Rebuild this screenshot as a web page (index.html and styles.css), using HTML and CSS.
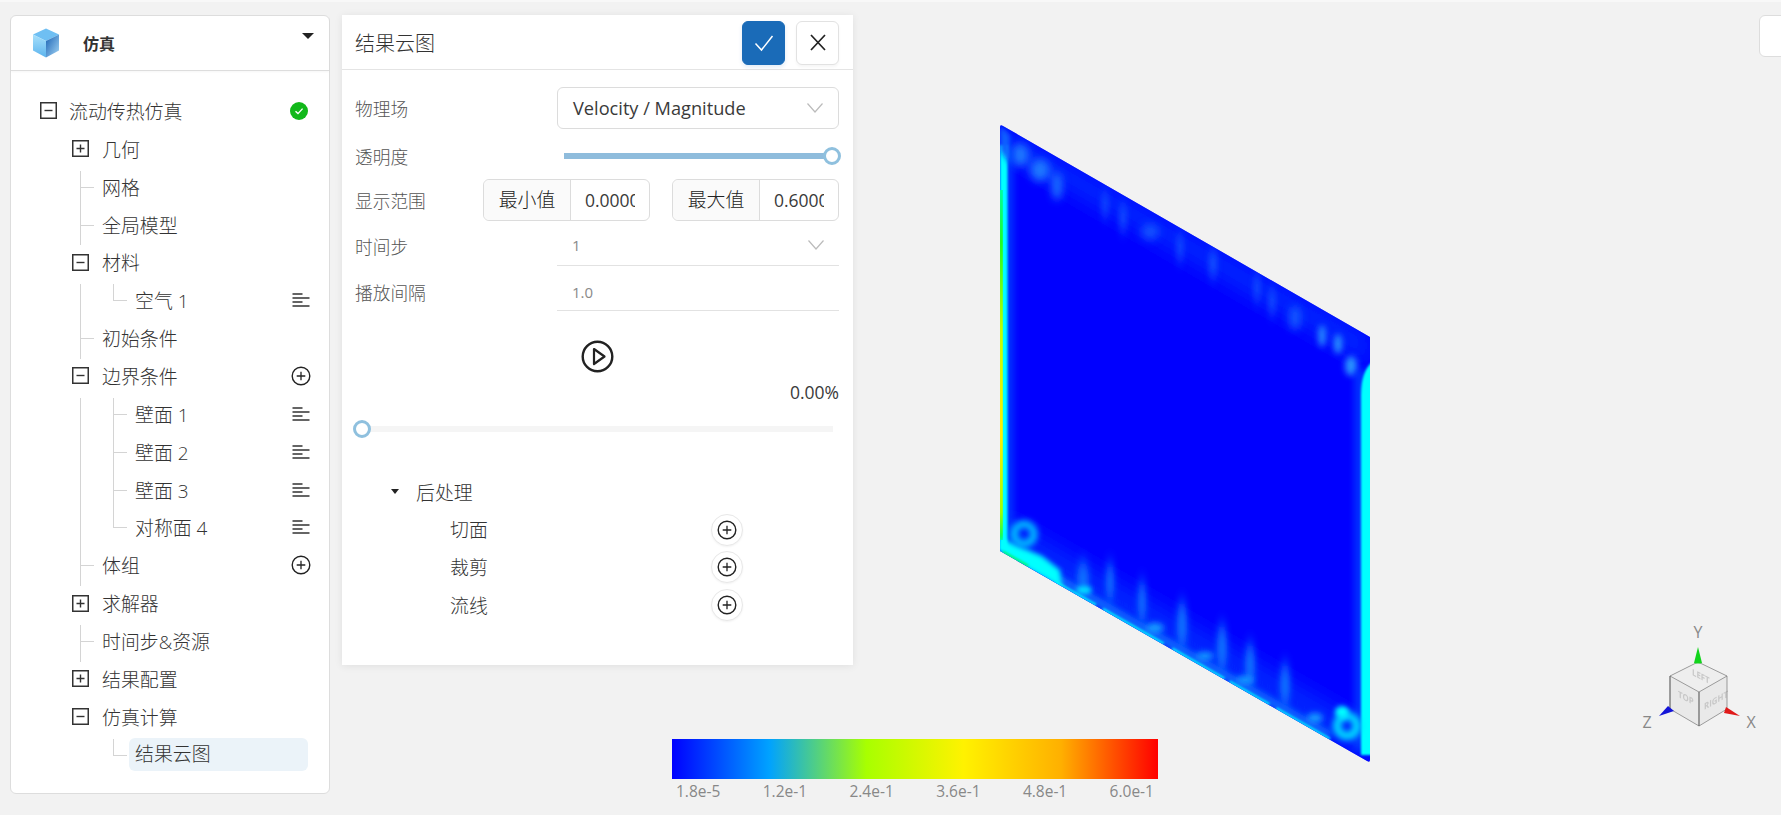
FILE: index.html
```html
<!DOCTYPE html>
<html lang="zh-CN">
  <head>
    <meta charset="UTF-8" />
    <title>仿真</title>
    <link rel="stylesheet" href="styles.css">
  </head>
  <body>
    <svg class="sprites" aria-hidden="true">
      <symbol id="i-plus" viewBox="0 0 17 17"><rect x="0.75" y="0.75" width="15.5" height="15.5" fill="#fff" stroke="#333" stroke-width="1.5"/><path d="M4.5 8.5h8M8.5 4.5v8" stroke="#333" stroke-width="1.4"/></symbol>
      <symbol id="i-minus" viewBox="0 0 17 17"><rect x="0.75" y="0.75" width="15.5" height="15.5" fill="#fff" stroke="#333" stroke-width="1.5"/><path d="M4.5 8.5h8" stroke="#333" stroke-width="1.4"/></symbol>
      <symbol id="i-lines" viewBox="0 0 18 14"><path d="M0.5 1h10M0.5 5h17M0.5 9h10M0.5 13h17" stroke="#333" stroke-width="1.3" fill="none"/></symbol>
      <symbol id="i-add" viewBox="0 0 20 20"><circle cx="10" cy="10" r="8.8" fill="#fff" stroke="#222" stroke-width="1.4"/><path d="M5.7 10h8.6M10 5.7v8.6" stroke="#222" stroke-width="1.3"/></symbol>
    </svg>

    <div class="app">
      <!-- 左侧仿真树 -->
      <aside class="sim-panel">
        <div class="sim-head">
          <svg class="sim-logo" viewBox="0 0 28 30">
            <defs>
              <linearGradient id="cube-a" x1="0" y1="0" x2="0" y2="1"><stop offset="0" stop-color="#a8e0fb"/><stop offset="1" stop-color="#5cb4ee"/></linearGradient>
              <linearGradient id="cube-b" x1="0" y1="0" x2="1" y2="1"><stop offset="0" stop-color="#1a62b4"/><stop offset="1" stop-color="#a4d6f6"/></linearGradient>
            </defs>
            <path d="M14 0.5 27 6.5 14 13 1 6.5Z" fill="#6fbff3"/>
            <path d="M1 6.5 14 13V29.5L1 22.5Z" fill="url(#cube-a)"/>
            <path d="M27 6.5 14 13V29.5L27 22.5Z" fill="url(#cube-b)"/>
          </svg>
          <span class="sim-title">仿真</span>
          <i class="caret caret-head"></i>
        </div>
        <ul class="tree">
          <li class="row row-root"><svg class="box"><use href="#i-minus"/></svg><span>流动传热仿真</span>
            <svg class="act done" viewBox="0 0 18 18"><circle cx="9" cy="9" r="9" fill="#12b81a"/><path d="M5.5 9.2 8 11.6 12.6 6.6" stroke="#fff" stroke-width="1.4" fill="none"/></svg>
          </li>
          <li class="row"><svg class="box"><use href="#i-plus"/></svg><span>几何</span></li>
          <li>
            <ul class="group">
              <li class="row leaf"><span>网格</span></li>
              <li class="row leaf"><span>全局模型</span></li>
            </ul>
          </li>
          <li class="row"><svg class="box"><use href="#i-minus"/></svg><span>材料</span></li>
          <li>
            <ul class="group">
              <li>
                <ul class="sub">
                  <li class="row deep"><span>空气 1</span><svg class="act lines"><use href="#i-lines"/></svg></li>
                </ul>
              </li>
              <li class="row leaf"><span>初始条件</span></li>
            </ul>
          </li>
          <li class="row"><svg class="box"><use href="#i-minus"/></svg><span>边界条件</span><svg class="act add"><use href="#i-add"/></svg></li>
          <li>
            <ul class="group">
              <li>
                <ul class="sub">
                  <li class="row deep"><span>壁面 1</span><svg class="act lines"><use href="#i-lines"/></svg></li>
                  <li class="row deep"><span>壁面 2</span><svg class="act lines"><use href="#i-lines"/></svg></li>
                  <li class="row deep"><span>壁面 3</span><svg class="act lines"><use href="#i-lines"/></svg></li>
                  <li class="row deep"><span>对称面 4</span><svg class="act lines"><use href="#i-lines"/></svg></li>
                </ul>
              </li>
              <li class="row leaf"><span>体组</span><svg class="act add"><use href="#i-add"/></svg></li>
            </ul>
          </li>
          <li class="row"><svg class="box"><use href="#i-plus"/></svg><span>求解器</span></li>
          <li>
            <ul class="group">
              <li class="row leaf"><span>时间步&amp;资源</span></li>
            </ul>
          </li>
          <li class="row"><svg class="box"><use href="#i-plus"/></svg><span>结果配置</span></li>
          <li class="row"><svg class="box"><use href="#i-minus"/></svg><span>仿真计算</span></li>
          <li>
            <ul class="sub sub-top">
              <li class="row deep selected"><span>结果云图</span></li>
            </ul>
          </li>
        </ul>
      </aside>

      <!-- 结果云图面板 -->
      <section class="result-panel">
        <div class="result-head">
          <span class="result-title">结果云图</span>
          <button class="btn btn-ok">
            <svg viewBox="0 0 20 20" width="20" height="20"><path d="M1.5 10.5 7.5 17 18.5 3" stroke="#fff" stroke-width="1.5" fill="none"/></svg>
          </button>
          <button class="btn btn-close">
            <svg viewBox="0 0 16 17" width="16" height="17"><path d="M1 1 15 16M15 1 1 16" stroke="#222" stroke-width="1.7" fill="none"/></svg>
          </button>
        </div>

        <div class="form">
          <div class="field field-select">
            <label>物理场</label>
            <div class="select">
              <span>Velocity / Magnitude</span>
              <svg class="chev" viewBox="0 0 16 10"><path d="M0.5 0.5 8 9 15.5 0.5" stroke="#bbb" stroke-width="1.2" fill="none"/></svg>
            </div>
          </div>
          <div class="field field-alpha">
            <label>透明度</label>
            <div class="slider slider-alpha"><i class="thumb"></i></div>
          </div>
          <div class="field field-range">
            <label>显示范围</label>
            <div class="ranges">
              <div class="range"><b>最小值</b><input value="0.00000" readonly></div>
              <div class="range"><b>最大值</b><input value="0.60000" readonly></div>
            </div>
          </div>
          <div class="field field-line">
            <label>时间步</label>
            <div class="plain">
              <span>1</span>
              <svg class="chev" viewBox="0 0 16 10"><path d="M0.5 0.5 8 9 15.5 0.5" stroke="#bbb" stroke-width="1.2" fill="none"/></svg>
            </div>
          </div>
          <div class="field field-line field-last">
            <label>播放间隔</label>
            <div class="plain"><span>1.0</span></div>
          </div>
        </div>

        <div class="play">
          <svg viewBox="0 0 33 33" width="33" height="33"><circle cx="16.5" cy="16.5" r="14.8" fill="none" stroke="#222" stroke-width="2.4"/><path d="M13 9 23.5 16.5 13 24Z" fill="none" stroke="#222" stroke-width="2.2" stroke-linejoin="round"/></svg>
        </div>
        <div class="percent">0.00%</div>
        <div class="slider slider-time"><i class="thumb"></i></div>

        <ul class="post">
          <li class="post-row post-root"><i class="caret"></i><span>后处理</span></li>
          <li class="post-row"><span>切面</span><button class="round"><svg width="20" height="20"><use href="#i-add"/></svg></button></li>
          <li class="post-row"><span>裁剪</span><button class="round"><svg width="20" height="20"><use href="#i-add"/></svg></button></li>
          <li class="post-row"><span>流线</span><button class="round"><svg width="20" height="20"><use href="#i-add"/></svg></button></li>
        </ul>
      </section>
    </div>

    <!-- 三维视图里的内容 -->
    <div class="corner-btn"></div>

    <svg class="mesh" viewBox="990 115 400 670">
      <defs>
        <clipPath id="plate"><path d="M1000 127Q1000 124 1003 126L1370 337V760Q1370 763 1367 761L1000 551Z"/></clipPath>
        <filter id="b1" filterUnits="userSpaceOnUse" x="990" y="115" width="400" height="670"><feGaussianBlur stdDeviation="1"/></filter>
        <filter id="b2" filterUnits="userSpaceOnUse" x="990" y="115" width="400" height="670"><feGaussianBlur stdDeviation="2.4"/></filter>
        <filter id="b3" filterUnits="userSpaceOnUse" x="990" y="115" width="400" height="670"><feGaussianBlur stdDeviation="3.2"/></filter>
        <filter id="b4" filterUnits="userSpaceOnUse" x="990" y="115" width="400" height="670"><feGaussianBlur stdDeviation="4.5"/></filter>
        <filter id="b9" filterUnits="userSpaceOnUse" x="990" y="115" width="400" height="670"><feGaussianBlur stdDeviation="10"/></filter>
        <filter id="streak" filterUnits="userSpaceOnUse" x="990" y="115" width="400" height="670"><feGaussianBlur stdDeviation="3 8"/></filter>
        <linearGradient id="edge" x1="0" y1="0" x2="0" y2="1">
          <stop offset="0" stop-color="#00ffa0"/>
          <stop offset="0.15" stop-color="#20ff20"/>
          <stop offset="0.4" stop-color="#c0ff00"/>
          <stop offset="0.7" stop-color="#fff000"/>
          <stop offset="0.92" stop-color="#a0ff00"/>
          <stop offset="1" stop-color="#00ff60"/>
        </linearGradient>
      </defs>
      <g clip-path="url(#plate)">
        <rect x="990" y="115" width="400" height="670" fill="#0000ff"/>
        <!-- 边缘的浅蓝 -->
        <g filter="url(#b9)" fill="#0028ff">
          <path d="M1000 125 1370 337V365L1000 150Z"/>
          <path d="M1000 515 1370 727V762L1000 551Z"/>
        </g>
        <!-- 上缘条纹 -->
        <g filter="url(#b4)" fill="#1c78ff">
          <ellipse cx="1020" cy="155" rx="9" ry="11"/>
          <ellipse cx="1040" cy="170" rx="10" ry="11"/>
          <ellipse cx="1057" cy="186" rx="5" ry="14"/>
          <ellipse cx="1150" cy="232" rx="9" ry="8" opacity="0.6"/>
          <ellipse cx="1295" cy="318" rx="6" ry="12" opacity="0.7"/>
        </g>
        <g filter="url(#streak)" fill="#1a6cff" opacity="0.8">
          <ellipse cx="1105" cy="205" rx="3" ry="12"/>
          <ellipse cx="1123" cy="218" rx="3.5" ry="13"/>
          <ellipse cx="1180" cy="248" rx="3" ry="13"/>
          <ellipse cx="1213" cy="264" rx="4" ry="13"/>
          <ellipse cx="1257" cy="288" rx="3" ry="13"/>
          <ellipse cx="1272" cy="302" rx="3.5" ry="12"/>
        </g>
        <g filter="url(#b3)" fill="#2a98ff">
          <ellipse cx="1322" cy="336" rx="3.5" ry="11"/>
          <ellipse cx="1338" cy="344" rx="4" ry="10"/>
          <ellipse cx="1351" cy="366" rx="6" ry="10"/>
        </g>
        <!-- 下缘条纹 -->
        <g filter="url(#streak)" fill="#0c74ff">
          <ellipse cx="1083" cy="580" rx="6" ry="18"/>
          <ellipse cx="1110" cy="582" rx="4" ry="20"/>
          <ellipse cx="1142" cy="602" rx="4" ry="22"/>
          <ellipse cx="1182" cy="625" rx="5" ry="24"/>
          <ellipse cx="1222" cy="648" rx="5" ry="24"/>
          <ellipse cx="1250" cy="665" rx="5" ry="22"/>
          <ellipse cx="1285" cy="685" rx="5" ry="22"/>
        </g>
        <path d="M1056 578 1330 736" stroke="#0a68ff" stroke-width="9" filter="url(#b3)"/>
        <g filter="url(#b3)" fill="#18a0ff">
          <ellipse cx="1155" cy="628" rx="9" ry="5"/>
          <ellipse cx="1205" cy="656" rx="9" ry="4"/>
          <ellipse cx="1245" cy="680" rx="9" ry="4"/>
          <ellipse cx="1315" cy="718" rx="8" ry="5"/>
        </g>
        <path d="M1056 582 1330 739" stroke="#00f0ff" stroke-width="2.4" stroke-dasharray="46 8 70 10 60 6" filter="url(#b1)"/>
        <!-- 左右两侧 -->
        <rect x="1000" y="150" width="14" height="400" fill="#0050ff" opacity="0.6" filter="url(#b3)"/>
        <rect x="1000" y="145" width="7.5" height="405" fill="#00ffff" filter="url(#b1)"/>
        <path d="M1000 125V150L1010 165V135Z" fill="#1060ff" filter="url(#b2)"/>
        <rect x="1000" y="190" width="2.8" height="350" fill="url(#edge)"/>
        <rect x="1354" y="370" width="16" height="380" fill="#0050ff" opacity="0.6" filter="url(#b3)"/>
        <path d="M1372 362Q1361 372 1361 395V755H1372Z" fill="#00ffff" filter="url(#b1)"/>
        <!-- 下缘的青色 -->
        <path d="M1000 538 1016 545 1042 556 1060 570 1062 588 1050 582 1000 553Z" fill="#00ffff" filter="url(#b2)"/>
        <path d="M1003 552 1028 566" stroke="#00ff80" stroke-width="3" filter="url(#b1)"/>
        <ellipse cx="1084" cy="590" rx="8" ry="4" fill="#00e0ff" filter="url(#b2)"/>
        <!-- 两个涡 -->
        <circle cx="1024" cy="534" r="10" fill="none" stroke="#00c8ff" stroke-width="7" filter="url(#b3)"/>
        <circle cx="1347" cy="726" r="10" fill="none" stroke="#00e0ff" stroke-width="8" filter="url(#b3)"/>
        <ellipse cx="1342" cy="712" rx="7" ry="6" fill="#00ffff" filter="url(#b2)"/>
      </g>
    </svg>

    <div class="legend">
      <div class="legend-bar"></div>
      <div class="legend-ticks">
        <span>1.8e-5</span><span>1.2e-1</span><span>2.4e-1</span><span>3.6e-1</span><span>4.8e-1</span><span>6.0e-1</span>
      </div>
    </div>

    <svg class="gizmo" viewBox="1640 622 120 112">
      <defs>
        <filter id="soft"><feGaussianBlur stdDeviation="0.7"/></filter>
      </defs>
      <path d="M1698 662 1727 676 1727 709 1699 726 1670 709 1670 676Z" fill="#e9e9e9"/>
      <path d="M1698 662 1727 676 1699 692 1670 676Z" fill="#eee"/>
      <g class="gizmo-face" filter="url(#soft)">
        <text transform="matrix(0.87 0.45 0 1 1692 675)">LEFT</text>
        <text transform="matrix(0.87 0.45 0 1 1678 697)">TOP</text>
        <text transform="matrix(0.87 -0.48 0 1 1704 710)">RIGHT</text>
      </g>
      <path d="M1670 676 1698 662 1727 676 1699 692ZM1727 676V709L1699 726 1670 709" fill="none" stroke="#777" stroke-width="0.7"/>
      <path d="M1670 676V709M1699 692V726" fill="none" stroke="#666" stroke-width="1.2"/>
      <path d="M1698 647 1702 663Q1698 664 1694 663Z" fill="#12d41c"/>
      <path d="M1659 716 1668 706 1674 711Z" fill="#1414d8"/>
      <path d="M1740 716 1726 707 1724 713Z" fill="#e01a1a"/>
      <text class="gizmo-axis" x="1698" y="638">Y</text>
      <text class="gizmo-axis" x="1647" y="728">Z</text>
      <text class="gizmo-axis" x="1751" y="728">X</text>
    </svg>
  </body>
</html>
```

FILE: styles.css
```css
* {
  padding: 0;
  margin: 0;
  box-sizing: border-box;
  list-style: none;
}

body {
  height: 815px;
  overflow: hidden;
  position: relative;
  background: #f2f2f2;
  border-top: 2px solid #f8f8f8;
  font-family: "Open Sans", "Noto Sans CJK SC", sans-serif;
  font-weight: 300;
  color: #333;
}

.sprites {
  display: none;
}

.app {
  display: flex;
  align-items: flex-start;
  gap: 12px;
  padding: 13px 0 0 10px;
}

/* 左侧仿真树 */
.sim-panel {
  width: 320px;
  height: 779px;
  background: #fff;
  border: 1px solid #ddd;
  border-radius: 6px;
}

.sim-head {
  height: 55px;
  display: flex;
  align-items: center;
  position: relative;
  border-bottom: 1px solid #ddd;
  box-shadow: 0 1px 2px #0000000a;
}

.sim-logo {
  width: 28px;
  height: 30px;
  margin-left: 21px;
}

.sim-title {
  margin-left: 23px;
  font-size: 16px;
  font-weight: 700;
  color: #333;
}

.caret {
  display: block;
  width: 0;
  height: 0;
  border-left: 5px solid transparent;
  border-right: 5px solid transparent;
  border-top: 6px solid #222;
}

.caret-head {
  position: absolute;
  top: 17px;
  right: 15px;
  border-left-width: 6px;
  border-right-width: 6px;
}

.tree {
  padding-top: 21px;
  font-size: 18.9px;
}

.row {
  height: 37.86px;
  display: flex;
  align-items: center;
  position: relative;
  padding-left: 61px;
  padding-right: 19px;
  white-space: nowrap;
}

.row-root {
  padding-left: 29px;
}

.box {
  width: 17px;
  height: 17px;
  margin-right: 13px;
  flex: none;
}

.row-root .box {
  margin-right: 12px;
}

.act {
  margin-left: auto;
  flex: none;
}

.done {
  width: 18px;
  height: 18px;
  margin-right: 2px;
}

.lines {
  width: 18px;
  height: 14px;
}

.add {
  width: 20px;
  height: 20px;
  margin-right: -1px;
}

.group,
.sub {
  position: relative;
}

.group::before,
.sub::before {
  content: "";
  position: absolute;
  width: 1px;
  background: #d4d4d4;
}

.group::before {
  left: 69px;
  top: 3px;
  bottom: -2px;
}

.sub::before {
  left: 102px;
  top: 3px;
  bottom: 18px;
}

.leaf {
  padding-left: 91px;
}

.leaf::before,
.deep::before {
  content: "";
  position: absolute;
  top: 50%;
  height: 1px;
  background: #d4d4d4;
}

.leaf::before {
  left: 69px;
  width: 14px;
}

.deep {
  padding-left: 124px;
}

.deep::before {
  left: 102px;
  width: 14px;
}

.selected span {
  width: 179px;
  height: 33px;
  line-height: 33px;
  padding-left: 6px;
  margin-left: -6px;
  background: #ebf3f9;
  border-radius: 6px;
}

/* 结果云图面板 */
.result-panel {
  width: 511px;
  height: 650px;
  background: #fff;
  box-shadow: 0 1px 8px #00000014;
}

.result-head {
  height: 55px;
  display: flex;
  align-items: center;
  padding: 1px 14px 0 13px;
  border-bottom: 1px solid #e4e4e4;
}

.result-title {
  font-size: 20px;
  margin-right: auto;
}

.btn {
  width: 43px;
  height: 44px;
  border-radius: 6px;
  border: 1px solid #e2e2e2;
  background: #fff;
  display: flex;
  align-items: center;
  justify-content: center;
  box-shadow: 0 2px 3px #0000000a;
}

.btn-ok {
  background: #1a6bb8;
  border-color: #1a6bb8;
  margin-right: 11px;
  box-shadow: 0 2px 4px #1a6bb822;
}

.form {
  padding: 17px 14px 0 13px;
  font-size: 17.7px;
}

.field {
  display: flex;
  align-items: center;
  justify-content: space-between;
}

.field label {
  color: #555;
}

.field-select {
  height: 42px;
}

.select {
  width: 282px;
  height: 42px;
  display: flex;
  align-items: center;
  justify-content: space-between;
  padding: 0 15px;
  border: 1px solid #dcdcdc;
  border-radius: 6px;
  font-size: 18.2px;
  font-weight: 400;
  color: #3a3a3a;
}

.chev {
  width: 16px;
  height: 10px;
}

.field-alpha {
  height: 24px;
  margin-top: 15px;
}

.slider {
  position: relative;
  height: 6px;
  background: #f5f5f5;
}

.slider-alpha {
  width: 268px;
  margin-right: 7px;
  background: #8fbcdc;
}

.thumb {
  position: absolute;
  top: 50%;
  width: 18px;
  height: 18px;
  margin-top: -9px;
  background: #fff;
  border: 3px solid #8fc0de;
  border-radius: 50%;
}

.slider-alpha .thumb {
  right: -9px;
}

.field-range {
  height: 42px;
  margin-top: 11px;
}

.ranges {
  display: flex;
  gap: 22px;
}

.range {
  width: 167px;
  height: 42px;
  display: flex;
  border: 1px solid #dcdcdc;
  border-radius: 6px;
  font-size: 18.9px;
}

.range b {
  width: 87px;
  flex: none;
  font-weight: 300;
  line-height: 40px;
  text-align: center;
  color: #222;
  background: #fafafa;
  border-right: 1px solid #dcdcdc;
  border-radius: 6px 0 0 6px;
}

.range input {
  width: 50px;
  height: 40px;
  margin-left: 14px;
  border: 0;
  outline: 0;
  background: transparent;
  font: inherit;
  font-size: 17.5px;
  font-weight: 400;
  color: #3a3a3a;
}

.field-line {
  height: 41px;
  margin-top: 4px;
}

.field-last {
  height: 40px;
  margin-top: 5px;
}

.field-last label,
.field-last .plain {
  padding-top: 2px;
}

.plain {
  width: 282px;
  height: 100%;
  display: flex;
  align-items: center;
  justify-content: space-between;
  padding: 0 15px;
  border-bottom: 1px solid #e2e2e2;
  font-size: 15px;
  font-weight: 400;
  color: #8a8a8a;
}

.play {
  display: flex;
  justify-content: center;
  margin-top: 29px;
}

.percent {
  margin-top: 7px;
  padding-right: 14px;
  text-align: right;
  font-size: 17.5px;
  font-weight: 400;
  line-height: 24px;
  color: #3a3a3a;
}

.slider-time {
  width: 471px;
  margin: 22px 0 0 20px;
}

.slider-time .thumb {
  left: -9px;
}

.post {
  margin-top: 41px;
  font-size: 18.9px;
}

.post-row {
  height: 37.6px;
  display: flex;
  align-items: center;
  padding-left: 108px;
  position: relative;
}

.post-root {
  padding-left: 49px;
}

.post-root .caret {
  margin-right: 17px;
  border-left-width: 4.5px;
  border-right-width: 4.5px;
  border-top-width: 5px;
}

.round {
  position: absolute;
  left: 369px;
  top: 3px;
  width: 32px;
  height: 32px;
  display: flex;
  align-items: center;
  justify-content: center;
  background: #fff;
  border: 1px solid #e8e8e8;
  border-radius: 50%;
  box-shadow: 0 1px 2px #0000000d;
}

/* 三维视图 */
.corner-btn {
  position: absolute;
  left: 1759px;
  top: 13px;
  width: 40px;
  height: 42px;
  background: #fff;
  border: 1px solid #ddd;
  border-radius: 6px;
}

.mesh {
  position: absolute;
  left: 990px;
  top: 113px;
  width: 400px;
  height: 670px;
}

.legend {
  position: absolute;
  left: 672px;
  top: 737px;
  width: 486px;
}

.legend-bar {
  height: 40px;
  background: linear-gradient(90deg, #0000ff 0%, #00a2ff 20%, #a8ff00 40%, #fff200 60%, #ffb000 80%, #ff0000 100%);
}

.legend-ticks {
  display: flex;
  justify-content: space-between;
  padding: 1px 4px 0;
  font-size: 15.5px;
  font-weight: 400;
  line-height: 22px;
  color: #888;
}

.gizmo {
  position: absolute;
  left: 1640px;
  top: 620px;
  width: 120px;
  height: 112px;
}

.gizmo-face {
  font-size: 9px;
  font-weight: 700;
  fill: #c8c8c8;
}

.gizmo-axis {
  font-size: 16px;
  font-weight: 400;
  fill: #888;
  text-anchor: middle;
}
```
